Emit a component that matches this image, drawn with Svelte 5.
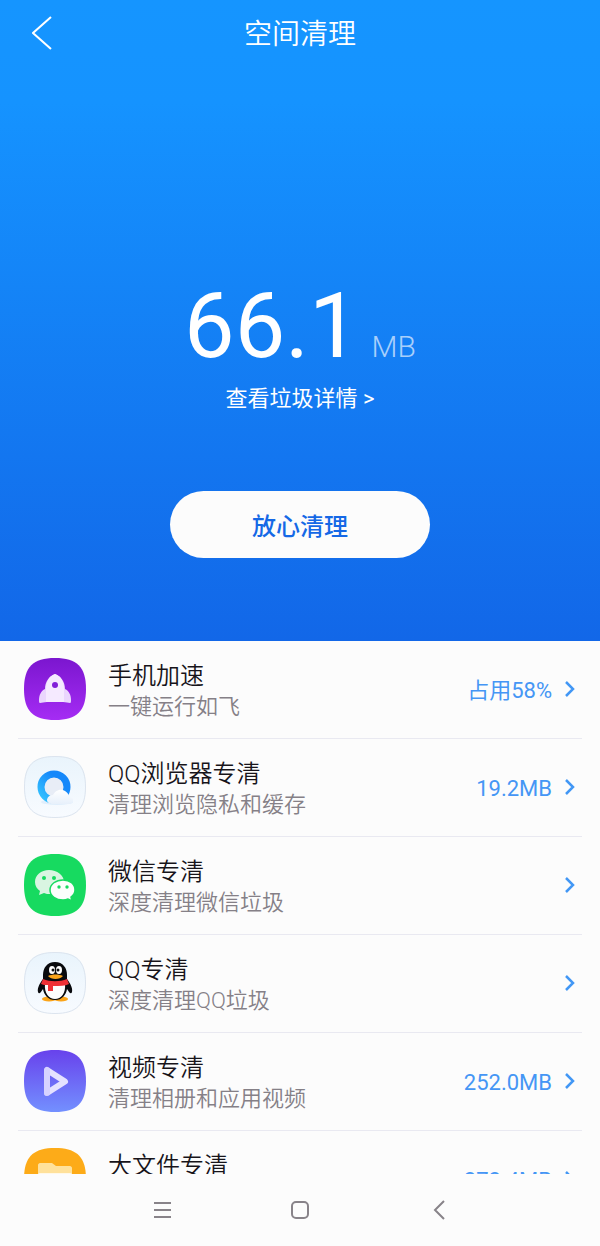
<script>
  export let total = '66.1';
  export let unit = 'MB';
  let items = [
    { icon: 'rocket', name: '手机加速', desc: '一键运行如飞', value: '占用58%' },
    { icon: 'browser', name: 'QQ浏览器专清', desc: '清理浏览隐私和缓存', value: '19.2MB' },
    { icon: 'wechat', name: '微信专清', desc: '深度清理微信垃圾', value: '' },
    { icon: 'qq', name: 'QQ专清', desc: '深度清理QQ垃圾', value: '' },
    { icon: 'video', name: '视频专清', desc: '清理相册和应用视频', value: '252.0MB' },
    { icon: 'folder', name: '大文件专清', desc: '', value: '272.4MB' },
  ];

  const fills = {
    rocket: 'url(#purple)',
    browser: 'url(#pale)',
    wechat: '#17da60',
    qq: 'url(#pale)',
    video: 'url(#violet)',
    folder: '#fdab18',
  };

  const tile = 'M31 0C53 0 62 9 62 31S53 62 31 62S0 53 0 31S9 0 31 0Z';
</script>

<style>
  :global(body) {
    margin: 0;
    background: #fcfcfc;
    font-family: Roboto, "Noto Sans CJK SC", sans-serif;
  }

  .page {
    display: flex;
    flex-direction: column;
    height: 100vh;
  }

  button {
    border: none;
    padding: 0;
    background: none;
    font-family: inherit;
    color: inherit;
    cursor: pointer;
  }

  svg {
    display: block;
  }

  .defs {
    position: absolute;
  }

  .hero {
    flex: none;
    display: flex;
    flex-direction: column;
    align-items: center;
    padding-bottom: 83px;
    color: #fff;
    background: linear-gradient(#1595ff 0%, #1593ff 16%, #1267e8 100%);
  }

  .bar {
    display: grid;
    grid-template-columns: 60px 1fr 60px;
    align-items: center;
    align-self: stretch;
    height: 66px;
    padding: 0 12px;
  }

  .back {
    display: flex;
    justify-content: center;
  }

  h1 {
    margin: 0;
    padding-top: 4px;
    font-size: 28px;
    font-weight: 350;
    line-height: 40px;
    text-align: center;
  }

  .total {
    display: flex;
    align-items: baseline;
    gap: 12px;
    margin-top: 205px;
  }

  .number {
    font-size: 90px;
    line-height: 112px;
  }

  .unit {
    font-size: 30px;
    font-weight: 300;
    line-height: 32px;
    color: #a8cffb;
  }

  .details {
    color: #fff;
    font-size: 22px;
    line-height: 32px;
    text-decoration: none;
  }

  .clean {
    width: 260px;
    height: 67px;
    margin-top: 76px;
    border-radius: 34px;
    background: #fcfcfc;
    color: #1568e6;
    font-size: 24px;
    font-weight: 500;
  }

  .list {
    flex: 1;
    min-height: 0;
    margin: 0;
    padding: 0 18px;
    list-style: none;
    overflow-y: auto;
    scrollbar-width: none;
  }

  .item {
    border-bottom: 1px solid #e9e9f1;
  }

  .row {
    display: flex;
    align-items: center;
    box-sizing: border-box;
    width: 100%;
    height: 97px;
    padding: 0 6px 2px;
    text-align: left;
    font-weight: 350;
  }

  .text {
    flex: 1;
    display: flex;
    flex-direction: column;
    margin-left: 22px;
    padding-top: 4px;
  }

  .name {
    color: #17141a;
    font-size: 24px;
    line-height: 32px;
  }

  .desc {
    min-height: 30px;
    color: #858087;
    font-size: 22px;
    line-height: 30px;
  }

  .value {
    margin-right: 12px;
    padding-top: 4px;
    color: #4596f5;
    font-size: 22px;
    font-weight: 400;
    line-height: 30px;
  }

  .nav {
    flex: none;
    display: flex;
    justify-content: center;
    align-items: center;
    gap: 110px;
    height: 72px;
    background: #fcfcfc;
  }
</style>

<svg class="defs" width="0" height="0" aria-hidden="true">
  <linearGradient id="purple" x2="0" y2="1">
    <stop offset="0" stop-color="#7b16cf" />
    <stop offset="1" stop-color="#a52cf4" />
  </linearGradient>
  <linearGradient id="pale" x2="0" y2="1">
    <stop offset="0" stop-color="#e9f4fc" />
    <stop offset="1" stop-color="#f8fbff" />
  </linearGradient>
  <linearGradient id="violet" x2="0" y2="1">
    <stop offset="0" stop-color="#6842ec" />
    <stop offset="1" stop-color="#7390ff" />
  </linearGradient>
  <linearGradient id="ring" x1="1" x2="0" y2="1">
    <stop offset="0.3" stop-color="#1688fa" />
    <stop offset="1" stop-color="#35c4ff" />
  </linearGradient>
  <linearGradient id="cloud" x2="0" y2="1">
    <stop offset="0" stop-color="#fff" />
    <stop offset="1" stop-color="#e7f0fb" />
  </linearGradient>
</svg>

<div class="page">
  <div class="hero">
    <div class="bar">
      <button class="back" aria-label="返回">
        <svg width="20" height="34" viewBox="0 0 20 34" fill="none" stroke="#fff" stroke-width="2">
          <path d="M19 1L1 17l18 16" />
        </svg>
      </button>
      <h1>空间清理</h1>
    </div>
    <div class="total">
      <span class="number">{total}</span>
      <span class="unit">{unit}</span>
    </div>
    <a class="details" href="#details">查看垃圾详情 &gt;</a>
    <button class="clean">放心清理</button>
  </div>

  <ul class="list">
    {#each items as item}
      <li class="item">
        <button class="row">
          <svg width="62" height="62" viewBox="0 0 62 62" aria-hidden="true">
            <path d={tile} fill={fills[item.icon]} />
            {#if item.icon === 'rocket'}
              <path d="M31 16c-6 2-10 8-10 15-4 2-6 6-6 11 0 2 0 3 1 3 2 0 4-1 7-1h16c3 0 5 1 7 1 1 0 1-1 1-3 0-5-2-9-6-11 0-7-4-13-10-15Z" fill="#ead6fd" />
              <path d="M31 16c-6 2-9 8-9 15v13h18V31c0-7-3-13-9-15Z" fill="#f5eaff" />
              <circle cx="31" cy="27" r="3" fill="#8120d9" />
            {:else if item.icon === 'browser'}
              <path d="M31 .5C52.500 .5 61.500 9.500 61.500 31S52.500 61.500 31 61.500 .5 52.500 .5 31 9.500 .5 31 .5Z" fill="none" stroke="#dce4ee" />
              <ellipse cx="33" cy="46" rx="16" ry="3" fill="#e0eefc" />
              <circle cx="30" cy="31" r="13" fill="#e8edf6" stroke="url(#ring)" stroke-width="7" />
              <path d="M29 48c-4 0-6-2-6-4s2-5 6-5c2-4 7-7 12-4 3 2 4 4 4 6 3 0 4 2 4 3 0 3-2 4-5 4Z" fill="url(#cloud)" />
            {:else if item.icon === 'wechat'}
              <path d="M25 16c-8 0-14 5-14 12 0 4 2 7 5 9l-1 4 5-2c2 1 4 1 6 1 8 0 14-5 14-12s-7-12-15-12Z" fill="#d9f5e2" />
              <circle cx="20" cy="24" r="2" fill="#17da60" />
              <circle cx="30" cy="24" r="2" fill="#17da60" />
              <path d="M39 26c-7 0-13 4-13 10s6 10 13 10c2 0 3 0 5-1l4 2-1-4c3-2 4-4 4-7 0-6-5-10-12-10Z" fill="#fcfefc" stroke="#17da60" stroke-width="1.500" />
              <circle cx="35" cy="33" r="1.700" fill="#17da60" />
              <circle cx="43" cy="33" r="1.700" fill="#17da60" />
            {:else if item.icon === 'qq'}
              <path d="M31 .5C52.500 .5 61.500 9.500 61.500 31S52.500 61.500 31 61.500 .5 52.500 .5 31 9.500 .5 31 .5Z" fill="none" stroke="#dce4ee" />
              <ellipse cx="25" cy="47" rx="7" ry="2.500" fill="#fba419" />
              <ellipse cx="37" cy="47" rx="7" ry="2.500" fill="#fba419" />
              <path d="M31 10c-8 0-12 6-12 13v4c-3 4-6 9-5 13 1 3 3 0 5-3 1 6 5 11 12 11s11-5 12-11c2 3 4 6 5 3 1-4-2-9-5-13v-4c0-7-4-13-12-13Z" fill="#090a0d" />
              <path d="M21 32c-1 9 4 15 10 15s11-6 10-15Z" fill="#fdfdfd" />
              <path d="M19 27c7 3 17 3 24 0l2 5c-4 2-9 2-16 2v5h-5v-6c-3 0-5 0-7-1Z" fill="#ef3035" />
              <ellipse cx="28" cy="18" rx="3" ry="4" fill="#fff" />
              <ellipse cx="35" cy="18" rx="3" ry="4" fill="#fff" />
              <circle cx="29" cy="18" r="1.500" fill="#111" />
              <circle cx="34" cy="18" r="1.500" fill="#111" />
              <path d="M24 24c4-2 11-2 15 0-3 4-12 4-15 0Z" fill="#fba419" />
            {:else if item.icon === 'video'}
              <path d="M23 20v23l18-11.500Z" fill="none" stroke="#e5e2ff" stroke-width="6" stroke-linejoin="round" />
              <path d="M23 20v23" stroke="#cdc8ff" stroke-width="6" stroke-linecap="round" opacity="0.600" />
            {:else}
              <path d="M14 40V17c0-1 1-2 2-2h12l4 3h14c1 0 2 1 2 2v20Z" fill="#ffe19b" />
              <rect x="14" y="25" width="34" height="22" rx="2" fill="#fff8e8" />
            {/if}
          </svg>
          <span class="text">
            <span class="name">{item.name}</span>
            <span class="desc">{item.desc}</span>
          </span>
          {#if item.value}
            <span class="value">{item.value}</span>
          {/if}
          <svg width="12" height="16" viewBox="0 0 12 16" fill="none" stroke="#4297f5" stroke-width="2.500" aria-hidden="true">
            <path d="M2 1l7 7-7 7" />
          </svg>
        </button>
      </li>
    {/each}
  </ul>

  <div class="nav">
    <button aria-label="菜单">
      <svg width="28" height="20" viewBox="0 0 28 20" fill="none" stroke="#888389" stroke-width="2">
        <path d="M6 3h17M6 10h17M6 17h17" />
      </svg>
    </button>
    <button aria-label="主页">
      <svg width="28" height="20" viewBox="0 0 28 20" fill="none" stroke="#888389" stroke-width="2">
        <rect x="6" y="2" width="16" height="16" rx="4" />
      </svg>
    </button>
    <button aria-label="后退">
      <svg width="28" height="20" viewBox="0 0 28 20" fill="none" stroke="#888389" stroke-width="2">
        <path d="M20 1l-9 9 9 9" />
      </svg>
    </button>
  </div>
</div>
